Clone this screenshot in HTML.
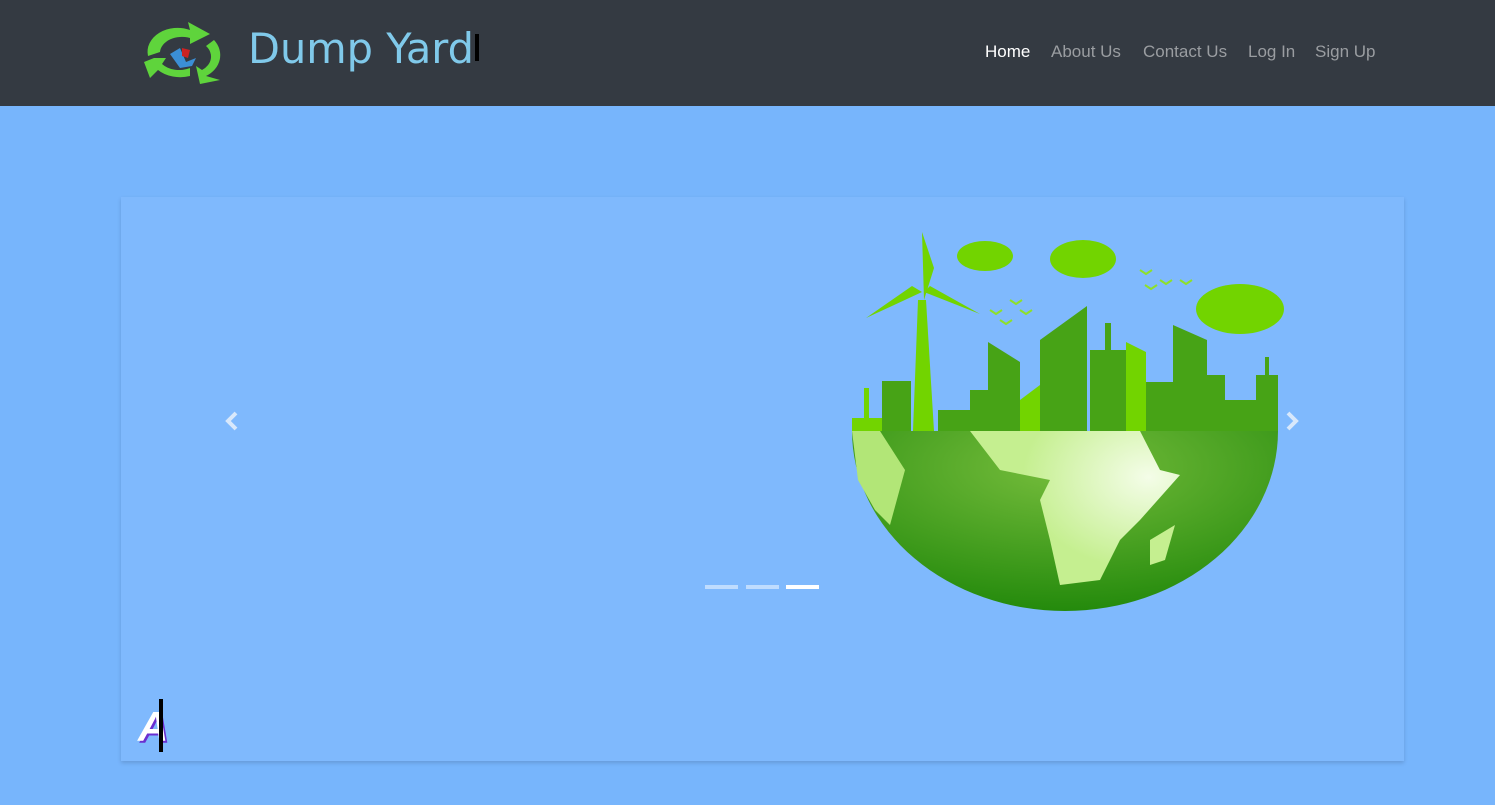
<!DOCTYPE html>
<html><head><meta charset="utf-8"><style>
*{margin:0;padding:0;box-sizing:border-box}
body{width:1495px;height:805px;background:#77b5fc;font-family:"Liberation Sans",sans-serif;position:relative;overflow:hidden}
.nav{position:absolute;left:0;top:0;width:1495px;height:106px;background:#343a42}
.brand{position:absolute;left:248px;top:24px;font-family:"Comic Sans MS","DejaVu Sans",sans-serif;font-size:41.5px;color:#80c9ea}
.cur{position:absolute;left:475px;top:34px;width:4px;height:27px;background:#000}
.links{position:absolute;top:42px;font-size:17px;color:#9a9da1}
.links span{position:absolute;white-space:nowrap}
.card{position:absolute;left:121px;top:197px;width:1283px;height:564px;background:#7fb9fd;box-shadow:0 2px 4px rgba(0,0,0,.15)}
.ind{position:absolute;top:585px;height:4px;width:33px;background:rgba(255,255,255,.5)}
</style></head><body>
<div class="nav">
<svg style="position:absolute;left:140px;top:18px" width="86" height="68" viewBox="0 0 86 68">
<path d="M8 38 A30 24 0 0 1 50 12 L48 4 L70 16 L50 26 L50 20 A22 16 0 0 0 20 34 Z" fill="#5fd43c"/>
<path d="M74 22 A28 24 0 0 1 66 58 L80 62 L60 66 L56 48 L62 52 A20 16 0 0 0 66 28 Z" fill="#5fd43c"/>
<path d="M14 40 L4 44 L10 60 L18 52 A30 22 0 0 0 50 58 L50 50 A22 16 0 0 1 22 46 L26 40 Z" fill="#5fd43c"/>
<path d="M30 36 L40 30 L46 44 L56 40 L52 48 L40 50 Z" fill="#3b8fd6"/>
<path d="M42 30 L50 32 L48 40 L42 38Z" fill="#c22"/>
</svg>
<div class="brand">Dump Yard</div><div class="cur"></div>
<div class="links">
<span style="left:985px;color:#fff">Home</span>
<span style="left:1051px">About Us</span>
<span style="left:1143px">Contact Us</span>
<span style="left:1248px">Log In</span>
<span style="left:1315px">Sign Up</span>
</div>
</div>
<div class="card"></div>
<svg style="position:absolute;left:0;top:0" width="1495" height="805">
<defs><radialGradient id="g" cx="0.5" cy="0.2" r="0.8"><stop offset="0" stop-color="#76bd3c"/><stop offset="1" stop-color="#248a0c"/></radialGradient>
<radialGradient id="l" cx="0.85" cy="0.3" r="0.6"><stop offset="0" stop-color="#f4fde8"/><stop offset="1" stop-color="#c5ef90"/></radialGradient></defs>
<path d="M852 431 L1278 431 A213 180 0 0 1 852 431 Z" fill="url(#g)"/>
<path d="M970 431 L1140 431 L1160 470 L1180 475 L1140 520 L1120 540 L1100 580 L1060 585 L1050 540 L1040 500 L1050 480 L1000 470 Z" fill="url(#l)"/>
<path d="M852 431 L880 431 L905 470 L890 525 L875 510 L858 480 Z" fill="#b2e677"/>
<path d="M1150 540 L1175 525 L1165 560 L1150 565Z" fill="#c5ef90"/>
<g fill="#47a316">
<rect x="882" y="381" width="29" height="50"/><rect x="938" y="410" width="32" height="21"/><rect x="970" y="390" width="20" height="41"/>
<path d="M988 342 L1020 362 L1020 431 L988 431Z"/><path d="M1040 340 L1087 306 L1087 431 L1040 431Z"/>
<rect x="1090" y="350" width="36" height="81"/><rect x="1105" y="323" width="6" height="30"/>
<rect x="1146" y="382" width="27" height="49"/><path d="M1173 325 L1207 340 L1207 431 L1173 431Z"/>
<rect x="1207" y="375" width="18" height="56"/><rect x="1225" y="400" width="32" height="31"/><rect x="1256" y="375" width="22" height="56"/><rect x="1265" y="357" width="4" height="20"/>
</g>
<g fill="#72d400">
<rect x="852" y="418" width="30" height="13"/><rect x="864" y="388" width="5" height="30"/>
<path d="M1126 342 L1146 352 L1146 431 L1126 431Z"/><path d="M1020 400 L1040 385 L1040 431 L1020 431Z"/>
<path d="M913 431 L918 300 L926 300 L934 431Z"/><path d="M922 232 L934 268 L924 300Z"/><path d="M922 292 L866 318 L912 286Z"/><path d="M924 292 L980 314 L930 286Z"/>
<ellipse cx="985" cy="256" rx="28" ry="15"/><ellipse cx="1083" cy="259" rx="33" ry="19"/><ellipse cx="1240" cy="309" rx="44" ry="25"/>
</g>
<g stroke="#8ee02a" stroke-width="2" fill="none"><path d="M990 310 l6 4 l6 -4 M1010 300 l6 4 l6 -4 M1000 320 l6 4 l6 -4 M1020 310 l6 4 l6 -4 M1140 270 l6 4 l6 -4 M1160 280 l6 4 l6 -4 M1145 285 l6 4 l6 -4 M1180 280 l6 4 l6 -4"/></g>
<path d="M236 413 L228 421 L236 429" stroke="#d8e8fb" stroke-width="4" fill="none"/>
<path d="M1288 413 L1296 421 L1288 429" stroke="#d8e8fb" stroke-width="4" fill="none"/>
</svg>
<div class="ind" style="left:705px"></div><div class="ind" style="left:746px"></div><div class="ind" style="left:786px;background:#fff"></div>
<div style="position:absolute;left:138px;top:703px;font-size:42px;font-weight:bold;font-style:italic;color:#fff;text-shadow:2px 2px 0 #6a2fd0">A</div>
<div style="position:absolute;left:159px;top:699px;width:4px;height:53px;background:#000"></div>
</body></html>
